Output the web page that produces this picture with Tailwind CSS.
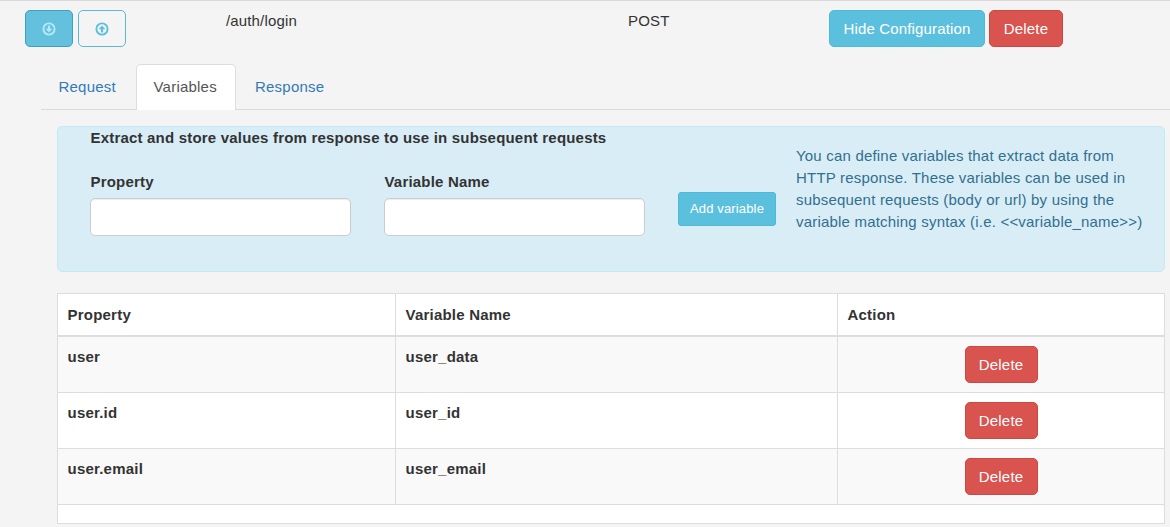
<!DOCTYPE html>
<html lang="en">
<head>
<meta charset="utf-8">
<title>Request configuration</title>
<script src="https://cdn.jsdelivr.net/npm/@tailwindcss/browser@4"></script>
</head>
<body class="h-[527px] overflow-hidden border-t border-[#dadada] bg-[#f4f4f4] font-['Liberation_Sans',Arial,sans-serif] text-[15px] leading-[22px] tracking-[0.15px] text-[#333]">
  <div class="flex h-[63px] items-start pl-[25px]">
    <div class="flex w-[201px] gap-[5px] pt-[9px]">
      <button class="flex h-[37px] w-12 items-center justify-center rounded-[5px] border border-[#3f9fbd] bg-[#64c1de] text-[#b4e9f7]" aria-label="Move down">
        <svg class="size-[14px]" viewBox="0 0 14 14" fill="none" stroke="currentColor"><circle cx="7" cy="7" r="5.6" stroke-width="1.9"/><path d="M7 3.6V7.5" stroke-width="2.2"/><path d="M3.6 6.8H10.4L7 10.5Z" fill="currentColor" stroke="none"/></svg>
      </button>
      <button class="flex h-[37px] w-12 items-center justify-center rounded-[5px] border border-[#5bb9d8] text-[#5bc0de]" aria-label="Move up">
        <svg class="size-[14px]" viewBox="0 0 14 14" fill="none" stroke="currentColor"><circle cx="7" cy="7" r="5.6" stroke-width="1.9"/><path d="M7 10.4V6.5" stroke-width="2.2"/><path d="M3.6 7.2H10.4L7 3.5Z" fill="currentColor" stroke="none"/></svg>
      </button>
    </div>
    <div class="w-[402px] pt-[9px]">/auth/login</div>
    <div class="w-[201px] pt-[9px]">POST</div>
    <div class="flex gap-1 pt-[9px] text-white">
      <button class="h-[37px] w-[156px] rounded-[5px] border border-[#4fb9d9] bg-[#5bc0de] pt-px">Hide Configuration</button>
      <button class="h-[37px] w-[74px] rounded-[5px] border border-[#cd4843] bg-[#d9534f] pt-px">Delete</button>
    </div>
  </div>

  <nav class="ml-[41px] flex h-[46px] border-b border-[#dadada] tracking-[0.22px] text-[#337ab7]">
    <a class="w-[95px] pt-3 pl-[17.5px]">Request</a>
    <a class="h-[46px] w-[100px] rounded-t-[5px] border border-b-0 border-[#dddddd] bg-white pt-[11px] pl-[16.5px] text-[#555]">Variables</a>
    <a class="pt-3 pl-[19px]">Response</a>
  </nav>

  <section class="mt-4 ml-[57px] flex h-[146px] w-[1108px] rounded-[5px] border border-[#c5e9f2] bg-[#d9edf7] tracking-[0.195px]">
    <div class="w-[620px] pl-8">
      <h2 class="pl-[0.5px] font-bold">Extract and store values from response to use in subsequent requests</h2>
      <div class="mt-[22px] flex gap-[33px]">
        <label class="w-[261px] font-bold"><span class="pl-[0.5px]">Property</span>
          <input class="mt-[5px] block h-[38px] w-full rounded-[5px] border border-[#ccc] bg-white shadow-[inset_0_1px_1px_rgba(0,0,0,0.075)]">
        </label>
        <label class="w-[261px] font-bold"><span class="pl-[0.5px]">Variable Name</span>
          <input class="mt-[5px] block h-[38px] w-full rounded-[5px] border border-[#ccc] bg-white shadow-[inset_0_1px_1px_rgba(0,0,0,0.075)]">
        </label>
      </div>
    </div>
    <button class="mt-[65px] h-[34px] w-[98px] rounded-[3px] border border-[#4fb9d9] bg-[#5bc0de] text-[13px] tracking-[0.15px] text-white">Add variable</button>
    <p class="pt-[18px] pl-5 text-[#31708f]">You can define variables that extract data from<br>HTTP response. These variables can be used in<br>subsequent requests (body or url) by using the<br>variable matching syntax (i.e. &lt;&lt;variable_name&gt;&gt;)</p>
  </section>

  <div class="mt-[21px] ml-[57px] w-[1108px] border border-[#dddddd] bg-white font-bold tracking-[0.22px]">
    <div class="flex h-[43px] border-b-2 border-[#dddddd]">
      <div class="w-[338px] border-r border-[#dddddd] pt-2.5 pl-[9.5px]">Property</div>
      <div class="w-[442px] border-r border-[#dddddd] pt-2.5 pl-[9.5px]">Variable Name</div>
      <div class="flex-1 pt-2.5 pl-[9.5px]">Action</div>
    </div>
    <div class="flex h-14 border-b border-[#dddddd] bg-[#f9f9f9]">
      <div class="w-[338px] border-r border-[#dddddd] pt-[9px] pl-[9.5px]">user</div>
      <div class="w-[442px] border-r border-[#dddddd] pt-[9px] pl-[9.5px]">user_data</div>
      <div class="flex flex-1 justify-center pt-[9px]"><button class="h-[37px] w-[73px] rounded-[5px] border border-[#cd4843] bg-[#d9534f] pt-px font-normal text-white">Delete</button></div>
    </div>
    <div class="flex h-14 border-b border-[#dddddd]">
      <div class="w-[338px] border-r border-[#dddddd] pt-[9px] pl-[9.5px]">user.id</div>
      <div class="w-[442px] border-r border-[#dddddd] pt-[9px] pl-[9.5px]">user_id</div>
      <div class="flex flex-1 justify-center pt-[9px]"><button class="h-[37px] w-[73px] rounded-[5px] border border-[#cd4843] bg-[#d9534f] pt-px font-normal text-white">Delete</button></div>
    </div>
    <div class="flex h-14 border-b border-[#dddddd] bg-[#f9f9f9]">
      <div class="w-[338px] border-r border-[#dddddd] pt-[9px] pl-[9.5px]">user.email</div>
      <div class="w-[442px] border-r border-[#dddddd] pt-[9px] pl-[9.5px]">user_email</div>
      <div class="flex flex-1 justify-center pt-[9px]"><button class="h-[37px] w-[73px] rounded-[5px] border border-[#cd4843] bg-[#d9534f] pt-px font-normal text-white">Delete</button></div>
    </div>
    <div class="h-[18px]"></div>
  </div>
</body>
</html>
